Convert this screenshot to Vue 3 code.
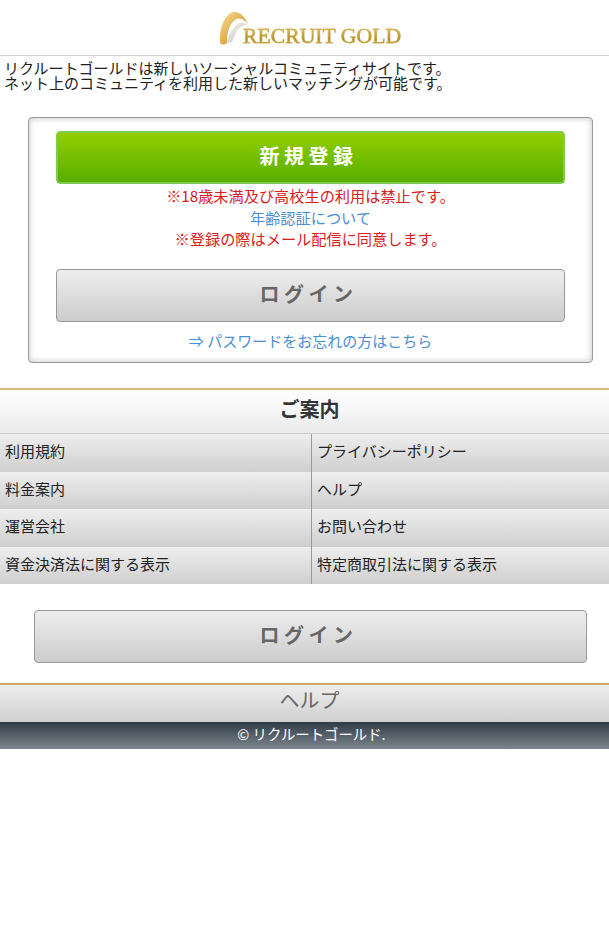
<script setup>
const rows = [
  ['利用規約', 'プライバシーポリシー'],
  ['料金案内', 'ヘルプ'],
  ['運営会社', 'お問い合わせ'],
  ['資金決済法に関する表示', '特定商取引法に関する表示'],
]
</script>

<template>
  <div class="page">
    <header class="head">
      <div class="logo">
        <svg class="arch" width="30" height="36" viewBox="0 0 30 36">
          <defs>
            <linearGradient id="archGold" x1="0" y1="0" x2="1" y2="1">
              <stop offset="0" stop-color="#f6dfa0" />
              <stop offset="0.5" stop-color="#e2b04c" />
              <stop offset="1" stop-color="#c98a1c" />
            </linearGradient>
            <linearGradient id="archGrey" x1="0" y1="0" x2="1" y2="1">
              <stop offset="0" stop-color="#ffffff" />
              <stop offset="1" stop-color="#b8b2a6" />
            </linearGradient>
          </defs>
          <path d="M1 32 C0 18 5 4 14 1 C21 0 26 6 29 13 C25 8 20 6 16 9 C10 13 8 22 8 32 C6 34 3 34 1 32 Z" fill="url(#archGold)" />
          <path d="M8 32 C9 24 13 16 20 12 C23 11 26 12 28 14 C23 14 19 17 17 22 C15 26 14 29 13 31 C11 31 9 32 8 32 Z" fill="url(#archGrey)" />
        </svg>
        <span class="brand">RECRUIT GOLD</span>
      </div>
    </header>
    <p class="intro">リクルートゴールドは新しいソーシャルコミュニティサイトです。<br />ネット上のコミュニティを利用した新しいマッチングが可能です。</p>

    <section class="card">
      <a class="btn green">新規登録</a>
      <div class="notes">
        <p class="red">※18歳未満及び高校生の利用は禁止です。</p>
        <p class="blue">年齢認証について</p>
        <p class="red">※登録の際はメール配信に同意します。</p>
      </div>
      <a class="btn grey">ログイン</a>
      <p class="forgot">⇒ パスワードをお忘れの方はこちら</p>
    </section>

    <section class="guide">
      <h2 class="guide-title">ご案内</h2>
      <div v-for="row in rows" :key="row[0]" class="row">
        <a class="cell">{{ row[0] }}</a>
        <a class="cell right">{{ row[1] }}</a>
      </div>
    </section>

    <div class="login-wrap">
      <a class="btn grey">ログイン</a>
    </div>

    <div class="help">ヘルプ</div>
    <footer class="foot">© リクルートゴールド.</footer>
  </div>
</template>

<style scoped>
.page {
  width: 609px;
  background: #fff;
  color: #222;
  font-family: "Noto Sans CJK JP", "Noto Sans", sans-serif;
}
p { margin: 0; }
.head {
  height: 55px;
  border-bottom: 1px solid #d0d0d0;
  display: flex;
  justify-content: center;
  align-items: flex-start;
}
.logo {
  height: 46px;
  margin-left: 11px;
  position: relative;
  width: 182px;
}
.arch { position: absolute; left: 0; top: 11px; }
.brand {
  position: absolute;
  left: 24px;
  top: 25px;
  font-family: "Liberation Serif", serif;
  font-size: 21.7px;
  line-height: 22px;
  white-space: nowrap;
  color: transparent;
  -webkit-text-stroke: 0.35px #c5a33a;
  background: linear-gradient(#e8cf78, #b48d20 65%, #d9bf62);
  -webkit-background-clip: text;
  background-clip: text;
}
.intro {
  padding: 4px 0 0 4px;
  font-size: 15px;
  line-height: 15px;
  height: 55px;
  box-sizing: border-box;
  white-space: nowrap;
}
.card {
  margin: 6px 16px 0 28px;
  height: 246px;
  box-sizing: border-box;
  border: 1px solid #999;
  border-radius: 4px;
  box-shadow: inset 0 0 6px rgba(0, 0, 0, 0.25);
  padding: 13px 27px 0;
  text-align: center;
}
.btn {
  display: flex;
  justify-content: center;
  align-items: center;
  height: 53px;
  box-sizing: border-box;
  border-radius: 4px;
  padding: 0 4px 5px 0;
  font-size: 20px;
  font-weight: 700;
  letter-spacing: 4.5px;
}
.green {
  color: #fff;
  border: 1px solid #7fcb4e;
  box-shadow: inset 0 0 0 1px #7fcb4e;
  background: linear-gradient(#94cf00, #56ad00);
}
.grey {
  color: #666;
  border: 1px solid #999;
  background: linear-gradient(#eeeeee, #cccccc);
}
.notes {
  padding-top: 1px;
  font-size: 15.2px;
  line-height: 21.5px;
  height: 85px;
  box-sizing: border-box;
  white-space: nowrap;
}
.red { color: #d9201c; }
.blue { color: #4a8fd6; }
.forgot {
  margin-top: 8px;
  font-size: 15px;
  line-height: 21px;
  color: #4a8fd6;
}
.guide {
  margin-top: 25px;
  border-top: 2px solid #d4bb7c;
}
.guide-title {
  margin: 0;
  height: 44px;
  box-sizing: border-box;
  border-bottom: 1px solid #c8c8c8;
  padding-left: 10px;
  background: linear-gradient(#ffffff, #ebebeb);
  font-size: 20px;
  font-weight: 700;
  line-height: 37px;
  text-align: center;
  color: #333;
}
.row {
  display: flex;
  height: 37.5px;
  background: linear-gradient(#eeeeee, #cfcfcf);
}
.cell {
  width: 312px;
  box-sizing: border-box;
  padding-left: 5px;
  border-right: 1px solid #999;
  font-size: 15px;
  line-height: 33px;
  color: #222;
  white-space: nowrap;
}
.cell.right {
  width: 297px;
  border-right: 0;
}
.login-wrap {
  padding: 26px 22px 20px 34px;
}
.help {
  height: 39px;
  box-sizing: border-box;
  border-top: 2px solid #cda868;
  padding-left: 10px;
  background: linear-gradient(#eeeeee, #cfcfcf);
  font-size: 20px;
  line-height: 30px;
  text-align: center;
  color: #666;
}
.foot {
  height: 27px;
  padding-left: 14px;
  background: linear-gradient(#2f3b47, #7d868e);
  color: #fff;
  font-size: 14.4px;
  line-height: 24px;
  text-align: center;
}
</style>
